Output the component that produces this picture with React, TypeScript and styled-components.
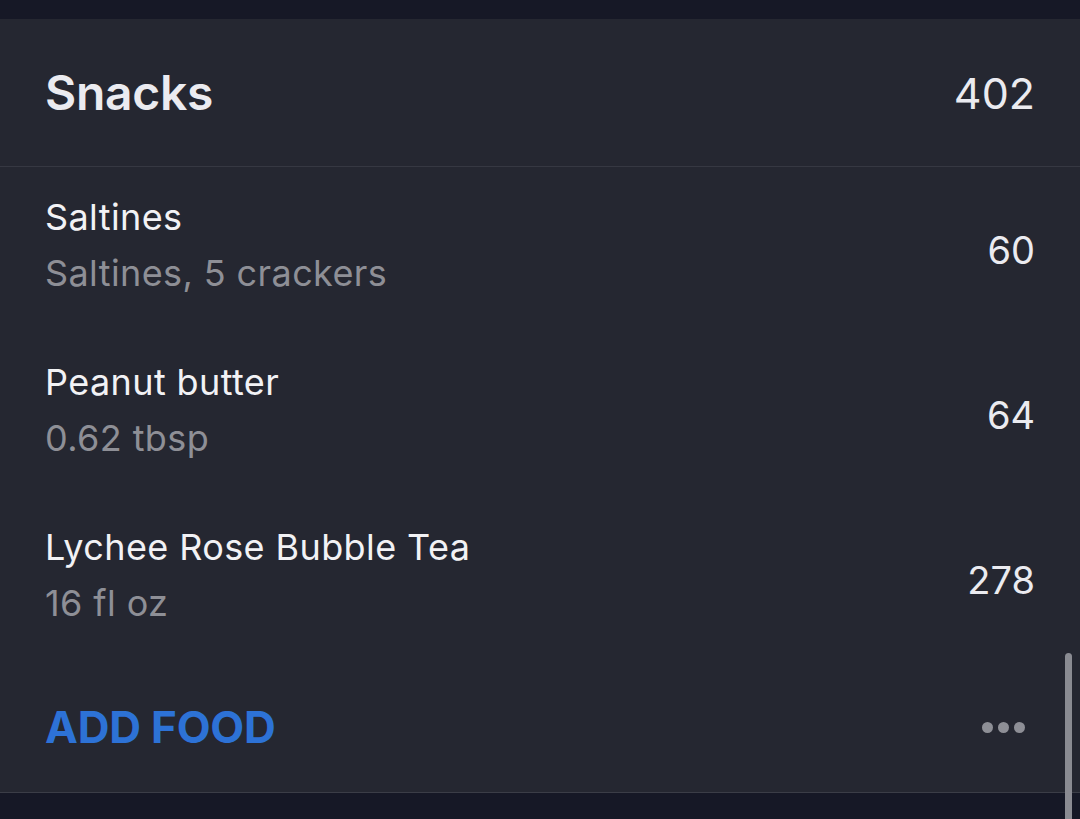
import React from "react";
import styled, { createGlobalStyle } from "styled-components";

const GlobalStyle = createGlobalStyle`
  html, body {
    margin: 0;
    padding: 0;
    background: #161826;
  }
  body {
    font-family: Inter, "Noto Sans", "Liberation Sans", sans-serif;
    -webkit-font-smoothing: antialiased;
  }
`;

const Screen = styled.div`
  position: relative;
  width: 1080px;
  height: 819px;
  overflow: hidden;
  background: #161826;
  padding-top: 19px;
  box-sizing: border-box;
`;

const Card = styled.section`
  background: #252731;
  border-bottom: 1px solid #3b3d47;
`;

const Header = styled.header`
  display: flex;
  align-items: center;
  justify-content: space-between;
  height: 147px;
  padding: 0 45px;
  border-bottom: 1px solid #363842;
`;

const Title = styled.h2`
  margin: 0;
  font-size: 48px;
  font-weight: 600;
  color: #ebebf0;
  letter-spacing: -0.3px;
`;

const Total = styled.span`
  font-size: 43px;
  font-weight: 400;
  color: #ebebf0;
`;

const Row = styled.div`
  display: flex;
  align-items: center;
  justify-content: space-between;
  height: 165px;
  padding: 0 45px;
  box-sizing: border-box;
`;

const Info = styled.div`
  display: flex;
  flex-direction: column;
  gap: 16px;
  margin-top: -10px;
`;

const Name = styled.span`
  font-size: 36px;
  line-height: 40px;
  letter-spacing: 0.4px;
  color: #f2f2f5;
`;

const Detail = styled.span`
  font-size: 36px;
  line-height: 40px;
  letter-spacing: 0.4px;
  color: #8e8f96;
`;

const Calories = styled.span`
  font-size: 38px;
  color: #ebebf0;
`;

const Footer = styled.div`
  display: flex;
  align-items: center;
  justify-content: space-between;
  height: 130px;
  padding: 0 55px 0 45px;
`;

const AddButton = styled.button`
  border: none;
  background: none;
  padding: 0;
  font-family: inherit;
  font-size: 44px;
  font-weight: 700;
  color: #2d72d6;
  letter-spacing: -0.2px;
  cursor: pointer;
`;

const Dots = styled.div`
  display: flex;
  gap: 5px;
`;

const Dot = styled.span`
  width: 11px;
  height: 11px;
  border-radius: 50%;
  background: #8e8f96;
`;

const Scrollbar = styled.div`
  position: absolute;
  right: 8px;
  top: 653px;
  width: 7px;
  height: 200px;
  border-radius: 4px;
  background: #8a8b92;
`;

type Food = { name: string; detail: string; kcal: number };

const foods: Food[] = [
  { name: "Saltines", detail: "Saltines, 5 crackers", kcal: 60 },
  { name: "Peanut butter", detail: "0.62 tbsp", kcal: 64 },
  { name: "Lychee Rose Bubble Tea", detail: "16 fl oz", kcal: 278 },
];

function App() {
  const total = foods.reduce((sum, f) => sum + f.kcal, 0);

  return (
    <Screen>
      <GlobalStyle />
      <Card>
        <Header>
          <Title>Snacks</Title>
          <Total>{total}</Total>
        </Header>
        {foods.map((food) => (
          <Row key={food.name}>
            <Info>
              <Name>{food.name}</Name>
              <Detail>{food.detail}</Detail>
            </Info>
            <Calories>{food.kcal}</Calories>
          </Row>
        ))}
        <Footer>
          <AddButton>ADD FOOD</AddButton>
          <Dots>
            <Dot />
            <Dot />
            <Dot />
          </Dots>
        </Footer>
      </Card>
      <Scrollbar />
    </Screen>
  );
}

export default App;
